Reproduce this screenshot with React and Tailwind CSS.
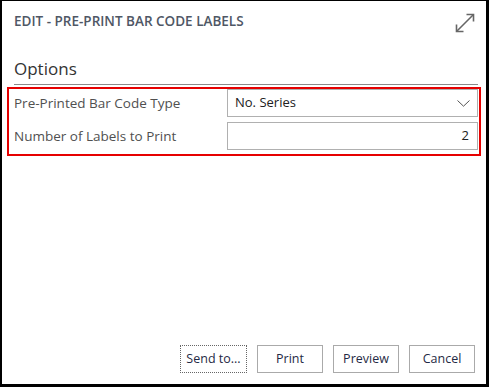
export default function App() {
  const font = { fontFamily: '"Open Sans", "Noto Sans", sans-serif' };
  return (
    <div
      className="w-[489px] h-[387px] box-border bg-white border-black border-l-2 border-t border-r-[3px] border-b-[3px] flex flex-col"
      style={font}
    >
      <div className="flex justify-between items-start pl-[12px] pr-[11px] pt-[12px]">
        <div className="text-[13.5px] leading-[18px] font-semibold text-[#4f5765] tracking-[0px] mt-[-1px]">
          EDIT - PRE-PRINT BAR CODE LABELS
        </div>
        <svg width="20" height="20" viewBox="0 0 20 20" fill="none" stroke="#666" strokeWidth="1.6">
          <path d="M1.5 18.5 L18.5 1.5" />
          <path d="M11.5 1.5 H18.5 V8.5" />
          <path d="M1.5 11.5 V18.5 H8.5" />
        </svg>
      </div>
      <div className="ml-[12px] mr-[8px] mt-[24px] border-b border-[#8a8a8a] pb-[3px]">
        <div className="text-[17px] leading-[24px] text-[#333]">Options</div>
      </div>
      <div className="ml-[5px] mr-[5px] mt-[2px] border-2 border-[#e60000] pl-[5px] pr-[1px] pb-[4px] flex flex-col gap-[5px]">
        <div className="flex items-center justify-between">
          <div className="text-[13.5px] text-[#505050]">Pre-Printed Bar Code Type</div>
          <div className="w-[251px] h-[28px] border border-[#b0b0b0] flex items-center justify-between pl-[7px] pr-[7px] text-[13px] text-[#212121]">
            <span>No. Series</span>
            <svg width="13" height="7" viewBox="0 0 13 7" fill="none" stroke="#555" strokeWidth="1">
              <path d="M0.5 0.5 L6.5 6.2 L12.5 0.5" />
            </svg>
          </div>
        </div>
        <div className="flex items-center justify-between">
          <div className="text-[13.5px] text-[#505050]">Number of Labels to Print</div>
          <div className="w-[251px] h-[28px] border border-[#b0b0b0] flex items-center justify-end pr-[8px] text-[13px] text-[#212121]">
            2
          </div>
        </div>
      </div>
      <div className="mt-auto flex justify-end gap-[10px] pr-[11px] pb-[11px]">
        <button className="w-[67px] h-[28px] border border-dotted border-[#666] text-[12.5px] text-[#1f2a44] bg-white">Send to...</button>
        <button className="w-[66px] h-[28px] border border-[#aaa] text-[12.5px] text-[#1f2a44] bg-white">Print</button>
        <button className="w-[66px] h-[28px] border border-[#aaa] text-[12.5px] text-[#1f2a44] bg-white">Preview</button>
        <button className="w-[66px] h-[28px] border border-[#aaa] text-[12.5px] text-[#1f2a44] bg-white">Cancel</button>
      </div>
    </div>
  );
}
